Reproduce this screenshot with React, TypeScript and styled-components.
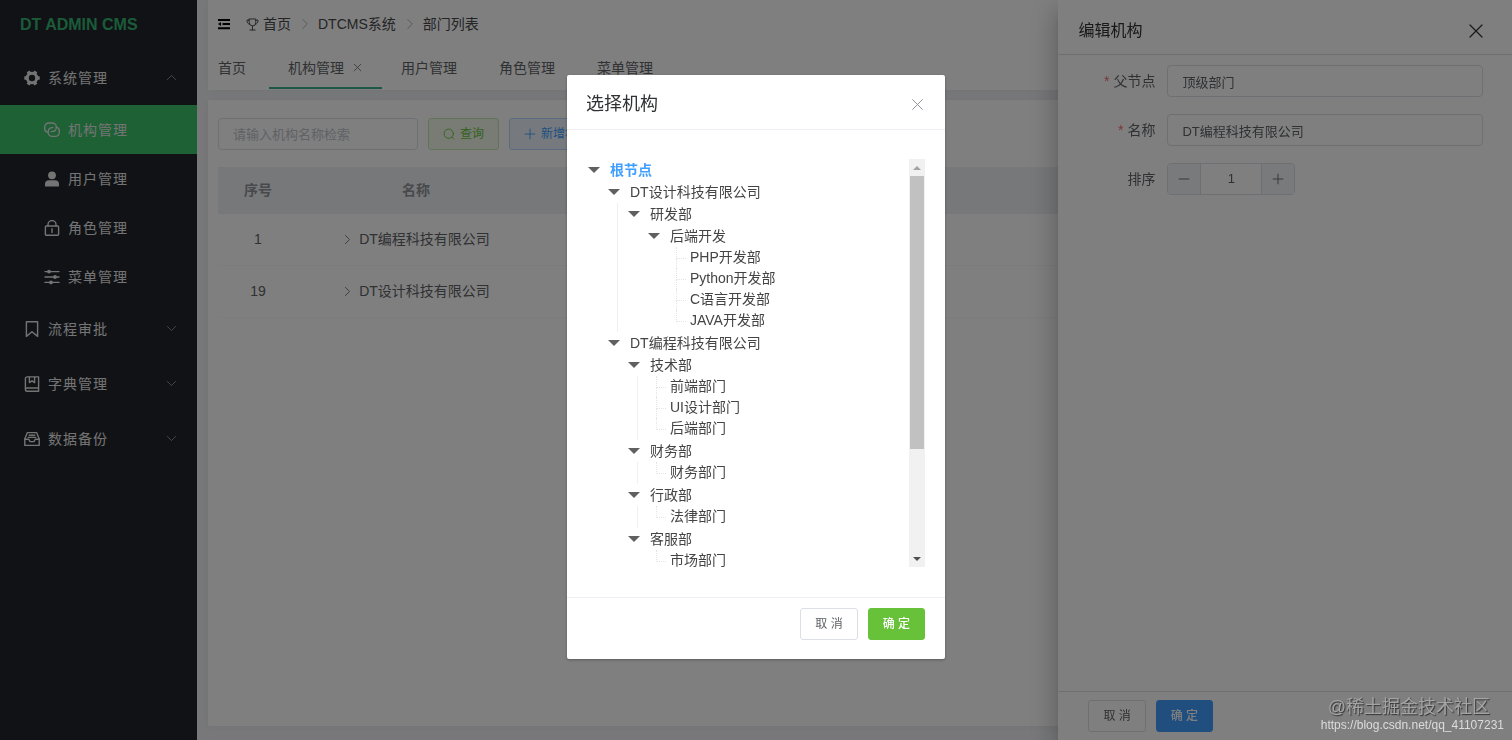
import React from "react";
import styled, { createGlobalStyle, css } from "styled-components";

const GlobalStyle = createGlobalStyle`
  *, *::before, *::after { box-sizing: border-box; }
  body {
    margin: 0;
    background: #f0f1f4;
    color: #606266;
    font-family: "Liberation Sans", "Noto Sans CJK SC", sans-serif;
    font-size: 14px;
    line-height: 20px;
  }
  button, input { font-family: inherit; line-height: inherit; }
  ul { list-style: none; margin: 0; padding: 0; }
`;

/* ---------- icons ---------- */

const Svg = styled.svg<{ $size: number; $weight: number }>`
  display: block;
  flex: none;
  width: ${(p) => p.$size}px;
  height: ${(p) => p.$size}px;
  fill: none;
  stroke: currentColor;
  stroke-width: ${(p) => p.$weight};
  stroke-linecap: round;
  stroke-linejoin: round;
`;

type IconName =
  | "gear" | "connection" | "user" | "lock" | "operation" | "bookmark" | "notebook" | "inbox"
  | "up" | "down" | "right" | "close" | "search" | "plus" | "minus" | "trophy" | "fold";

const shapes: Record<IconName, React.ReactNode> = {
  gear: (
    <>
      <circle cx="8" cy="8" r="4.700" strokeWidth="3" />
      {[30, 90, 150, 210, 270, 330].map((angle) => (
        <rect
          key={angle}
          x="6.200"
          y="0.300"
          width="3.600"
          height="3"
          rx="0.600"
          fill="currentColor"
          stroke="none"
          transform={`rotate(${angle} 8 8)`}
        />
      ))}
    </>
  ),
  connection: (
    <>
      <path d="M3.400 10.200A3.600 3.600 0 0 1 .7 6.600V5a4 4 0 0 1 4-4h3.600a4 4 0 0 1 4 4v.6a4 4 0 0 1-4 4H7.200" />
      <path d="M12.600 5.200a3.800 3.800 0 0 1 2.700 3.600v1.600a4 4 0 0 1-4 4H8.200a4 4 0 0 1-4-4v-.8a4 4 0 0 1 4-4H9" />
    </>
  ),
  user: (
    <g stroke="none" fill="currentColor">
      <circle cx="8" cy="4.300" r="3.900" />
      <path d="M1 15v-2.200C1 10.600 2.600 9.200 4.800 9.200h6.400c2.200 0 3.800 1.400 3.800 3.600V15a.6.6 0 0 1-.6.6H1.600A.6.6 0 0 1 1 15z" />
    </g>
  ),
  lock: (
    <>
      <rect x="1.400" y="6" width="13.200" height="9.300" rx="1" />
      <path d="M4 5.800V4.600a4 4 0 0 1 8 0v1.200M8 8.800v3.600" />
    </>
  ),
  operation: (
    <>
      <path d="M1 2.600h14M1 8h14M1 13.400h14" />
      <g fill="currentColor" stroke="none">
        <circle cx="5" cy="2.600" r="1.900" />
        <circle cx="11" cy="8" r="1.900" />
        <circle cx="7" cy="13.400" r="1.900" />
      </g>
    </>
  ),
  bookmark: <path d="M2.400.8h11.200v14.600L8 10.800l-5.600 4.600z" />,
  notebook: (
    <>
      <path d="M14.600 12V.9H3.200A1.800 1.800 0 0 0 1.400 2.700v10.700a1.800 1.800 0 0 0 1.800 1.800h11.400V12H3.200a1.700 1.700 0 0 0-1.700 1.400" />
      <path d="M5.400 1.200v5.400L8 4.800l2.600 1.800V1.200" />
    </>
  ),
  inbox: (
    <>
      <path d="M.8 8 3.400 1.600h9.200L15.200 8v6.400H.8z" />
      <path d="M.8 8.200h4L6 10.600h4l1.200-2.400h4M5.200 4.200h5.600M4.400 6.400h7.200" />
    </>
  ),
  up: <path d="M2 11l6-6 6 6" />,
  down: <path d="M2 5l6 6 6-6" />,
  right: <path d="M5 2l6 6-6 6" />,
  close: <path d="M2 2l12 12M14 2L2 14" />,
  search: (
    <>
      <circle cx="7.600" cy="7.600" r="6.200" />
      <path d="M12 12.200l2.400 2.400" />
    </>
  ),
  plus: <path d="M8 1.500v13M1.500 8h13" />,
  minus: <path d="M1.500 8h13" />,
  trophy: (
    <>
      <path d="M4 1.200h8v4.600a4 4 0 0 1-8 0zM8 10v4.600M4.800 14.800h6.400" />
      <path d="M4 2.600H1.200c0 3 1 4.600 3.200 5M12 2.600h2.800c0 3-1 4.600-3.200 5" />
    </>
  ),
  fold: (
    <g stroke="none" fill="currentColor">
      <path d="M0 1.200h16v2.700H0zM6 6.700h10v2.700H6zM0 12.200h16v2.700H0zM0 8l4-2.600v5.200z" />
    </g>
  ),
};

function Icon({ name, size = 14, weight = 1.4 }: { name: IconName; size?: number; weight?: number }) {
  return (
    <Svg viewBox="0 0 16 16" $size={size} $weight={weight} aria-hidden="true">
      {shapes[name]}
    </Svg>
  );
}

/* ---------- page frame ---------- */

const Page = styled.div`
  display: flex;
  min-height: 100vh;
`;

const Sidebar = styled.aside`
  flex: none;
  width: 197px;
  background: #20242b;
  color: #e8e8e8;
`;

const Logo = styled.h1`
  margin: 0;
  height: 50px;
  padding-left: 20px;
  font-size: 16px;
  line-height: 49px;
  color: #36b673;
`;

const MenuLink = styled.a<{ $level: 1 | 2; $active?: boolean }>`
  display: flex;
  align-items: center;
  gap: 8px;
  height: ${(p) => (p.$level === 1 ? 55 : 49)}px;
  padding: 0 20px 0 ${(p) => (p.$level === 1 ? 24 : 44)}px;
  color: inherit;
  letter-spacing: 1px;
  text-decoration: none;
  ${(p) => p.$active && css`background: #3ac26a;`}
`;

const MenuText = styled.span`
  flex: 1;
`;

const Arrow = styled.span`
  color: #a0a4aa;
`;

const Main = styled.div`
  flex: 1;
  min-width: 0;
  display: flex;
  flex-direction: column;
  gap: 10px;
  padding: 0 0 14px 11px;
`;

const Header = styled.header`
  height: 90px;
  padding-left: 10px;
  background: #fff;
  box-shadow: 0 0 8px rgba(0, 0, 0, 0.06);
`;

const Crumbs = styled.nav`
  display: flex;
  align-items: center;
  height: 48px;
  color: #48494c;
`;

const FoldButton = styled.button`
  margin: 0 16px 0 0;
  padding: 0;
  border: 0;
  background: none;
  color: #000;
`;

const Crumb = styled.a`
  display: flex;
  align-items: center;
  gap: 4px;
  color: inherit;
  text-decoration: none;
`;

const Separator = styled.span`
  margin: 0 7px 0 8px;
  color: #a8abb2;
`;

const Tabs = styled.div`
  display: flex;
  height: 41px;
`;

const Tab = styled.button<{ $active?: boolean; $first?: boolean }>`
  display: flex;
  align-items: center;
  gap: 9px;
  padding: 0 ${(p) => (p.$active ? 20 : 23)}px 0 ${(p) => (p.$first ? 0 : 19)}px;
  border: 0;
  border-bottom: 2px solid ${(p) => (p.$active ? "#36b08a" : "transparent")};
  background: none;
  color: #606266;
  font-size: 14px;
`;

const Card = styled.section`
  flex: 1;
  padding: 18px 10px;
  background: #fff;
  box-shadow: 0 0 8px rgba(0, 0, 0, 0.06);
`;

const Toolbar = styled.form`
  display: flex;
  gap: 10px;
  margin-bottom: 17px;
`;

const TextInput = styled.input<{ $width: string }>`
  width: ${(p) => p.$width};
  height: 32px;
  padding: 0 14px;
  border: 1px solid #dcdfe6;
  border-radius: 4px;
  background: #fff;
  color: #606266;
  font-size: 13px;
  &::placeholder { color: #c0c4cc; opacity: 1; }
`;

const tones = {
  plain: ["#fff", "#dcdfe6", "#606266"],
  green: ["#f0f9eb", "#c2e7b0", "#67c23a"],
  blue: ["#ecf5ff", "#b3d8ff", "#409eff"],
  solidGreen: ["#67c23a", "#67c23a", "#fff"],
  solidBlue: ["#409eff", "#409eff", "#fff"],
};

const Button = styled.button<{ $tone: keyof typeof tones }>`
  display: flex;
  align-items: center;
  gap: 5px;
  height: 32px;
  padding: 0 14px;
  border: 1px solid ${(p) => tones[p.$tone][1]};
  border-radius: 3px;
  background: ${(p) => tones[p.$tone][0]};
  color: ${(p) => tones[p.$tone][2]};
  font-size: 12px;
  font-weight: ${(p) => (p.$tone.startsWith("solid") ? 500 : 400)};
  white-space: nowrap;
`;

const Table = styled.table`
  width: 100%;
  table-layout: fixed;
  border-collapse: collapse;
`;

const HeadCell = styled.th<{ $width?: number }>`
  width: ${(p) => (p.$width ? `${p.$width}px` : "auto")};
  height: 46px;
  padding: 0;
  border-bottom: 1px solid #ebeef5;
  background: #eef1f4;
  color: #909399;
`;

const Cell = styled.td`
  height: 52px;
  padding: 0;
  border-bottom: 1px solid #f8f9fb;
  text-align: center;
`;

const NameCell = styled.div`
  display: flex;
  align-items: center;
  justify-content: center;
  gap: 6px;
`;

/* ---------- drawer ---------- */

const Drawer = styled.aside`
  position: fixed;
  z-index: 10;
  top: 0;
  right: 0;
  bottom: 0;
  display: flex;
  flex-direction: column;
  width: 30%;
  background: #fff;
  box-shadow: 0 8px 10px -5px rgba(0, 0, 0, 0.2), 0 16px 24px 2px rgba(0, 0, 0, 0.14),
    0 6px 30px 5px rgba(0, 0, 0, 0.12);
`;

const DrawerHeader = styled.header`
  display: flex;
  align-items: center;
  justify-content: space-between;
  height: 55px;
  padding: 8px 28px 0 20px;
  border-bottom: 1px solid #dcdfe6;
  color: #303133;
`;

const DrawerTitle = styled.h2`
  margin: 0;
  font-size: 16px;
  font-weight: 400;
`;

const CloseButton = styled.button`
  padding: 0;
  border: 0;
  background: none;
  color: inherit;
`;

const DrawerForm = styled.form`
  flex: 1;
  display: flex;
  flex-direction: column;
  gap: 17px;
  padding: 10px 29px 0 20px;
`;

const Field = styled.div`
  display: flex;
  align-items: center;
  gap: 12px;
`;

const Label = styled.label<{ $required?: boolean }>`
  flex: none;
  width: 77px;
  text-align: right;
  ${(p) => p.$required && css`
    &::before { content: "*"; margin-right: 4px; color: #f56c6c; }
  `}
`;

const Stepper = styled.div`
  display: flex;
  width: 128px;
  height: 32px;
  border: 1px solid #dcdfe6;
  border-radius: 4px;
  overflow: hidden;
`;

const StepButton = styled.button`
  display: flex;
  align-items: center;
  justify-content: center;
  flex: none;
  width: 32px;
  padding: 0;
  border: 0;
  background: #f2f5f8;
  color: #606266;
`;

const StepInput = styled.input`
  flex: 1;
  min-width: 0;
  padding: 0;
  border: solid #dcdfe6;
  border-width: 0 1px;
  color: #606266;
  font-size: 13px;
  text-align: center;
`;

const DrawerFooter = styled.footer`
  display: flex;
  gap: 10px;
  height: 49px;
  padding: 8px 30px;
  border-top: 1px solid #dcdfe6;
`;

/* ---------- dialog ---------- */

const Overlay = styled.div`
  position: fixed;
  z-index: 20;
  inset: 0;
  display: flex;
  align-items: flex-start;
  justify-content: center;
  padding-top: 75px;
  background: rgba(0, 0, 0, 0.5);
`;

const Dialog = styled.section`
  width: 25%;
  border-radius: 2px;
  background: #fff;
  box-shadow: 0 1px 3px rgba(0, 0, 0, 0.3);
`;

const DialogHeader = styled.header`
  display: flex;
  align-items: center;
  justify-content: space-between;
  height: 55px;
  padding: 4px 21px 0 19px;
  border-bottom: 1px solid #ebeef5;
  color: #909399;
`;

const DialogTitle = styled.h2`
  margin: 0;
  color: #303133;
  font-size: 18px;
  font-weight: 400;
  line-height: 24px;
`;

const DialogBody = styled.div`
  display: flex;
  height: 467px;
  padding: 29px 20px 30px 19px;
`;

const TreePane = styled.div`
  flex: 1;
  overflow: hidden;
`;

const Scrollbar = styled.div`
  display: flex;
  flex-direction: column;
  width: 16px;
  background: #f1f1f1;
`;

const ScrollButton = styled.button`
  display: flex;
  align-items: center;
  justify-content: center;
  height: 17px;
  padding: 0;
  border: 0;
  background: none;
`;

const ScrollTrack = styled.div`
  flex: 1;
  padding: 0 1px;
`;

const ScrollThumb = styled.div`
  height: 73%;
  background: #c1c1c1;
`;

const Triangle = styled.span<{ $size: number; $color: string; $up?: boolean }>`
  border: solid transparent;
  border-width: ${(p) => (p.$up ? `0 ${p.$size}px ${p.$size}px` : `${p.$size}px ${p.$size}px 0`)};
  ${(p) => (p.$up ? "border-bottom-color" : "border-top-color")}: ${(p) => p.$color};
`;

const Branch = styled.ul<{ $nested?: boolean; $line?: boolean; $leaves?: boolean }>`
  position: relative;
  padding-left: ${(p) => (p.$nested ? 20 : 0)}px;
  padding-bottom: ${(p) => (p.$leaves ? 1 : 0)}px;
  ${(p) => p.$line && css`
    &::before {
      content: "";
      position: absolute;
      inset: 0 auto 0 11px;
      border-left: 1px solid #f0f0f0;
    }
  `}
`;

const TreeItem = styled.li`
  position: relative;
`;

const TreeRow = styled.div<{ $root?: boolean }>`
  display: flex;
  align-items: center;
  gap: 10px;
  height: 22px;
  padding-left: 2px;
  color: ${(p) => (p.$root ? "#409eff" : "#444")};
  font-weight: ${(p) => (p.$root ? 700 : 400)};
  white-space: nowrap;
`;

const Leaf = styled.li<{ $last: boolean }>`
  position: relative;
  height: 21px;
  padding-left: 24px;
  color: #444;
  line-height: 20px;
  white-space: nowrap;
  &::before {
    content: "";
    position: absolute;
    top: 0;
    left: 10px;
    width: 10px;
    height: 12px;
    border: dotted #e4e4e4;
    border-width: 0 0 1px 1px;
  }
  ${(p) => !p.$last && css`
    &::after {
      content: "";
      position: absolute;
      top: 12px;
      bottom: 0;
      left: 10px;
      border-left: 1px dotted #e4e4e4;
    }
  `}
`;

const DialogFooter = styled.footer`
  display: flex;
  justify-content: flex-end;
  gap: 10px;
  padding: 10px 20px 19px;
  border-top: 1px solid #ebeef5;
`;

const Watermark = styled.div`
  position: fixed;
  z-index: 30;
  right: 8px;
  bottom: 7px;
  display: flex;
  flex-direction: column;
  align-items: flex-end;
  color: #dcdcdc;
  font-size: 12px;
  line-height: 16px;
`;

const Community = styled.span`
  margin-right: 14px;
  color: #a4a4a4;
  font-size: 18px;
  line-height: 20px;
  text-shadow: 1px 1px 1px #333;
`;

/* ---------- data ---------- */

type Node = { name: string; children?: Node[] };

const leaf = (name: string): Node => ({ name });

const tree: Node = {
  name: "根节点",
  children: [
    {
      name: "DT设计科技有限公司",
      children: [
        {
          name: "研发部",
          children: [
            { name: "后端开发", children: ["PHP开发部", "Python开发部", "C语言开发部", "JAVA开发部"].map(leaf) },
          ],
        },
      ],
    },
    {
      name: "DT编程科技有限公司",
      children: [
        { name: "技术部", children: ["前端部门", "UI设计部门", "后端部门"].map(leaf) },
        { name: "财务部", children: [leaf("财务部门")] },
        { name: "行政部", children: [leaf("法律部门")] },
        { name: "客服部", children: [leaf("市场部门")] },
      ],
    },
  ],
};

function TreeNode({ node, last, root }: { node: Node; last: boolean; root?: boolean }) {
  if (!node.children) {
    return <Leaf $last={last}>{node.name}</Leaf>;
  }
  const children = node.children;
  return (
    <TreeItem>
      <TreeRow $root={root}>
        <Triangle $size={6} $color="#606060" />
        {node.name}
      </TreeRow>
      <Branch $nested $line={!last} $leaves={!children[0].children}>
        {children.map((child, i) => (
          <TreeNode key={child.name} node={child} last={i === children.length - 1} />
        ))}
      </Branch>
    </TreeItem>
  );
}

type MenuEntry = { text: string; icon: IconName; level: 1 | 2; arrow?: IconName; active?: boolean };

const menu: MenuEntry[] = [
  { text: "系统管理", icon: "gear", level: 1, arrow: "up" },
  { text: "机构管理", icon: "connection", level: 2, active: true },
  { text: "用户管理", icon: "user", level: 2 },
  { text: "角色管理", icon: "lock", level: 2 },
  { text: "菜单管理", icon: "operation", level: 2 },
  { text: "流程审批", icon: "bookmark", level: 1, arrow: "down" },
  { text: "字典管理", icon: "notebook", level: 1, arrow: "down" },
  { text: "数据备份", icon: "inbox", level: 1, arrow: "down" },
];

const tabs = ["首页", "机构管理", "用户管理", "角色管理", "菜单管理"];

const rows = [
  { id: 1, name: "DT编程科技有限公司" },
  { id: 19, name: "DT设计科技有限公司" },
];

export default function App() {
  return (
    <>
      <GlobalStyle />
      <Page>
        <Sidebar>
          <Logo>DT ADMIN CMS</Logo>
          <nav>
            {menu.map((m) => (
              <MenuLink key={m.text} href="#" $level={m.level} $active={m.active}>
                <Icon name={m.icon} size={16} />
                <MenuText>{m.text}</MenuText>
                {m.arrow && <Arrow><Icon name={m.arrow} size={11} weight={1.2} /></Arrow>}
              </MenuLink>
            ))}
          </nav>
        </Sidebar>

        <Main>
          <Header>
            <Crumbs aria-label="breadcrumb">
              <FoldButton type="button" aria-label="折叠菜单"><Icon name="fold" size={12} /></FoldButton>
              <Crumb href="#"><Icon name="trophy" size={13} weight={1.2} />首页</Crumb>
              <Separator><Icon name="right" size={12} weight={1.2} /></Separator>
              <Crumb href="#">DTCMS系统</Crumb>
              <Separator><Icon name="right" size={12} weight={1.2} /></Separator>
              <Crumb href="#">部门列表</Crumb>
            </Crumbs>
            <Tabs role="tablist">
              {tabs.map((t, i) => (
                <Tab key={t} type="button" role="tab" aria-selected={i === 1} $active={i === 1} $first={i === 0}>
                  {t}
                  {i === 1 && <Icon name="close" size={9} />}
                </Tab>
              ))}
            </Tabs>
          </Header>

          <Card>
            <Toolbar onSubmit={(e) => e.preventDefault()}>
              <TextInput $width="200px" aria-label="机构名称" placeholder="请输入机构名称检索" />
              <Button type="submit" $tone="green"><Icon name="search" size={12} weight={1.2} />查询</Button>
              <Button type="button" $tone="blue"><Icon name="plus" size={12} weight={1.2} />新增机构</Button>
            </Toolbar>
            <Table>
              <thead>
                <tr>
                  <HeadCell $width={80}>序号</HeadCell>
                  <HeadCell $width={236}>名称</HeadCell>
                  <HeadCell />
                </tr>
              </thead>
              <tbody>
                {rows.map((r) => (
                  <tr key={r.id}>
                    <Cell>{r.id}</Cell>
                    <Cell><NameCell><Icon name="right" size={11} weight={1.2} />{r.name}</NameCell></Cell>
                    <Cell />
                  </tr>
                ))}
              </tbody>
            </Table>
          </Card>
        </Main>
      </Page>

      <Drawer aria-label="编辑机构">
        <DrawerHeader>
          <DrawerTitle>编辑机构</DrawerTitle>
          <CloseButton type="button" aria-label="关闭"><Icon name="close" size={16} weight={1.2} /></CloseButton>
        </DrawerHeader>
        <DrawerForm>
          <Field>
            <Label htmlFor="parent" $required>父节点</Label>
            <TextInput id="parent" $width="100%" defaultValue="顶级部门" />
          </Field>
          <Field>
            <Label htmlFor="name" $required>名称</Label>
            <TextInput id="name" $width="100%" defaultValue="DT编程科技有限公司" />
          </Field>
          <Field>
            <Label htmlFor="order">排序</Label>
            <Stepper>
              <StepButton type="button" aria-label="减少"><Icon name="minus" size={12} weight={1.2} /></StepButton>
              <StepInput id="order" defaultValue="1" />
              <StepButton type="button" aria-label="增加"><Icon name="plus" size={12} weight={1.2} /></StepButton>
            </Stepper>
          </Field>
        </DrawerForm>
        <DrawerFooter>
          <Button type="button" $tone="plain">取 消</Button>
          <Button type="button" $tone="solidBlue">确 定</Button>
        </DrawerFooter>
      </Drawer>

      <Overlay>
        <Dialog role="dialog" aria-modal="true" aria-label="选择机构">
          <DialogHeader>
            <DialogTitle>选择机构</DialogTitle>
            <CloseButton type="button" aria-label="关闭"><Icon name="close" size={13} weight={1.2} /></CloseButton>
          </DialogHeader>
          <DialogBody>
            <TreePane>
              <Branch><TreeNode node={tree} last root /></Branch>
            </TreePane>
            <Scrollbar>
              <ScrollButton type="button" aria-label="向上滚动"><Triangle $size={4} $color="#a3a3a3" $up /></ScrollButton>
              <ScrollTrack><ScrollThumb /></ScrollTrack>
              <ScrollButton type="button" aria-label="向下滚动"><Triangle $size={4} $color="#505050" /></ScrollButton>
            </Scrollbar>
          </DialogBody>
          <DialogFooter>
            <Button type="button" $tone="plain">取 消</Button>
            <Button type="button" $tone="solidGreen">确 定</Button>
          </DialogFooter>
        </Dialog>
      </Overlay>

      <Watermark>
        <Community>@稀土掘金技术社区</Community>
        <span>https://blog.csdn.net/qq_41107231</span>
      </Watermark>
    </>
  );
}
